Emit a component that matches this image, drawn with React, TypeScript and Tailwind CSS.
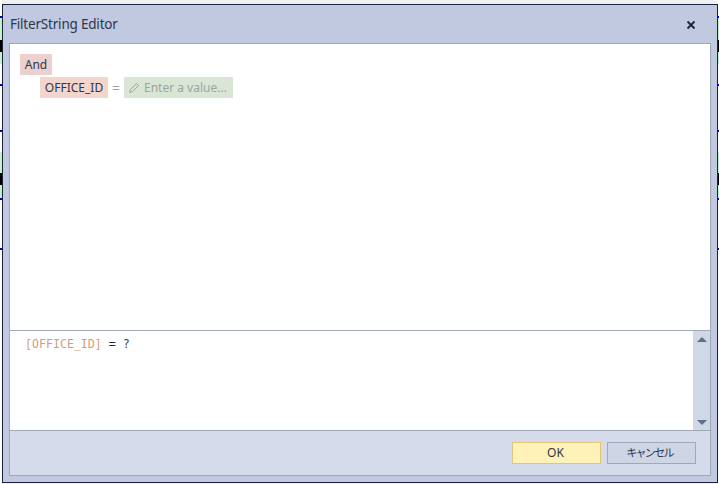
const slivers = [
  { top: 18, height: 46, color: "bg-[#c8f0c8]" },
  { top: 40, height: 12, color: "bg-black" },
  { top: 152, height: 46, color: "bg-[#c8f0c8]" },
  { top: 173, height: 12, color: "bg-black" },
  { top: 16, height: 2, color: "bg-[#0000c8]" },
  { top: 84, height: 2, color: "bg-[#0000c8]" },
  { top: 130, height: 2, color: "bg-[#0000c8]" },
  { top: 198, height: 2, color: "bg-[#0000c8]" },
  { top: 248, height: 2, color: "bg-[#0000c8]" },
];

const Backdrop = ({ side }: { side: "left" | "right" }) => (
  <div className={side === "left" ? "absolute left-0 top-0 h-full w-[2px] bg-white" : "absolute right-0 top-0 h-full w-[2px] bg-white"}>
    {slivers.map((s, i) => (
      <div
        key={i}
        className={`absolute left-0 w-full ${s.color}`}
        style={{ top: s.top, height: s.height }}
      />
    ))}
  </div>
);

const App = () => {
  return (
    <div className="relative h-[484px] w-[719px] overflow-hidden bg-[#f0f0f0] pl-[2px] pr-[1px] pt-[4px] pb-[1px] font-['Noto_Sans','Noto_Sans_CJK_JP',sans-serif]">
      <Backdrop side="left" />
      <Backdrop side="right" />
      <div className="relative flex h-full flex-col border border-[#1b2340] bg-[#c0c9e0] pl-[6px] pr-[6px] pb-[6px]">
        {/* title bar */}
        <div className="flex h-[38px] shrink-0 items-center justify-between pl-[1px] pr-[15px] pt-[1px]">
          <span className="text-[13.5px] tracking-[-0.2px] text-[#2d3748]">FilterString Editor</span>
          <svg width="10" height="10" viewBox="0 0 10 10" className="text-[#1c2338]">
            <path d="M1.5 1.5 L8.5 8.5 M8.5 1.5 L1.5 8.5" stroke="currentColor" strokeWidth="1.8" />
          </svg>
        </div>

        <div className="flex min-h-0 flex-1 flex-col border border-[#a0a8b8]">
          {/* filter tree */}
          <div className="h-[286px] shrink-0 bg-white pl-[10px] pt-[10px] text-[12px] text-[#2d3748]">
            <div className="flex">
              <span className="flex h-[21px] w-[32px] items-center justify-center bg-[#eccfcf]">And</span>
            </div>
            <div className="mt-[2px] flex items-center pl-[20px]">
              <span className="flex h-[21px] w-[68px] items-center justify-center bg-[#f2d5cc]">OFFICE_ID</span>
              <span className="flex w-[16px] justify-center text-[14px] text-[#9aa0a8]">=</span>
              <span className="flex h-[21px] w-[109px] items-center gap-[4px] bg-[#d9e5d5] pl-[4px] text-[#9aa5a0]">
                <svg width="12" height="12" viewBox="0 0 12 12" fill="none" stroke="currentColor" strokeWidth="1">
                  <path d="M1.5 10.5 L2.5 7.5 L8.5 1.5 L10.5 3.5 L4.5 9.5 Z" />
                </svg>
                Enter a value...
              </span>
            </div>
          </div>

          {/* expression */}
          <div className="flex h-[100px] shrink-0 border-t border-[#a0a8b8] bg-white">
            <div className="flex-1 pl-[15px] pt-[5px] font-['DejaVu_Sans_Mono',monospace] text-[11.6px] leading-[16px]">
              <span className="text-[#d29c80]">[OFFICE_ID]</span>
              <span className="text-[#1c2338]"> = </span>
              <span className="text-[#1a4a6a]">?</span>
            </div>
            <div className="flex w-[17px] flex-col items-center justify-between bg-[#d0d8e8] pb-[5px] pt-[6px]">
              <svg width="10" height="5" viewBox="0 0 10 5"><path d="M5 0 L10 5 L0 5 Z" fill="#5f6f85" /></svg>
              <svg width="10" height="5" viewBox="0 0 10 5"><path d="M0 0 L10 0 L5 5 Z" fill="#5f6f85" /></svg>
            </div>
          </div>

          {/* footer */}
          <div className="flex flex-1 items-center justify-end gap-[6px] border-t border-[#a0a8b8] bg-[#d5dbea] pr-[14px] text-[12px] text-[#2d3748]">
            <button className="h-[22px] w-[89px] border border-[#e3c474] bg-[#fff2b8] pr-[2px]">OK</button>
            <button className="h-[22px] w-[89px] border border-[#a0a8b8] bg-[#ced6e6] pr-[4px] pt-[1px] text-[11px] tracking-[-1.7px]">キャンセル</button>
          </div>
        </div>
      </div>
    </div>
  );
};

export default App;
